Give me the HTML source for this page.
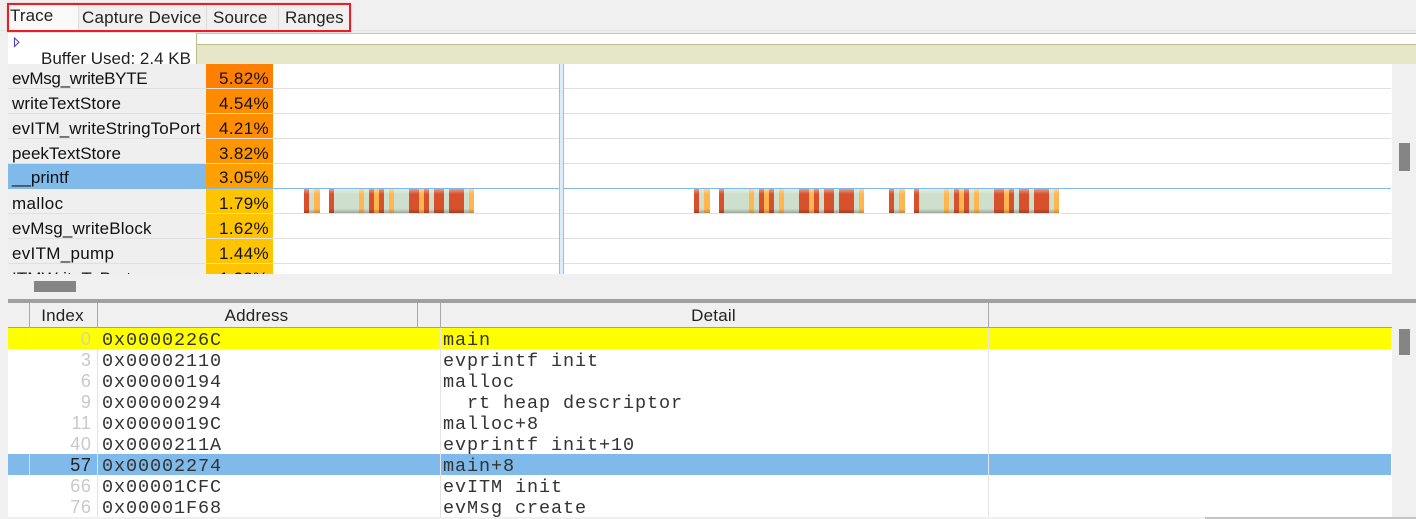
<!DOCTYPE html>
<html><head><meta charset="utf-8">
<style>
html,body{margin:0;padding:0;background:#f0f0f0}
body{width:1416px;height:519px;position:relative;overflow:hidden;font-family:"Liberation Sans",sans-serif;color:#111}
div{position:absolute;box-sizing:border-box}
.t{font-size:17px;line-height:25px;white-space:nowrap;letter-spacing:.1px}
.n{left:12px;width:190px}
.p{left:206px;width:67px;height:25px;text-align:right;padding-right:4px}
.t.p{letter-spacing:.35px}
.l{left:8px;width:1383px;height:1px;background:#e0e0e0}
.s{top:189px;height:24px;background-image:linear-gradient(rgba(255,255,255,.42),rgba(255,255,255,0) 22%,rgba(0,0,0,0) 82%,rgba(0,0,0,.25))}
.r{background-color:#d7522c}.g{background-color:#cfdfcd}.o{background-color:#ffb650}
.m{font-family:"Liberation Mono",monospace;font-size:18.5px;letter-spacing:.9px;line-height:21px;white-space:pre;color:#333}
.i{left:30px;width:61.5px;text-align:right;font-size:18px;letter-spacing:.6px;line-height:21px;color:#c9c9c9}
.h{top:303px;height:24px;font-size:17px;letter-spacing:.2px;line-height:25px;text-align:center;color:#222}
.v{top:303px;width:1px;height:25px;background:#a8a8a8}
.sb{background:#858585}
</style></head><body>

<!-- tabs -->
<div style="left:8px;top:4px;width:70px;height:26px;background:#f9f9f9"></div>
<div style="left:78px;top:4px;width:1px;height:26px;background:#ddd"></div>
<div style="left:206px;top:4px;width:1px;height:26px;background:#ddd"></div>
<div style="left:278px;top:4px;width:1px;height:26px;background:#ddd"></div>
<div style="left:0;top:30px;width:1416px;height:1px;background:#e4e4e4"></div>
<div class="t" style="left:10px;top:3px;color:#222">Trace</div>
<div class="t" style="left:82px;top:5px;color:#222;letter-spacing:.17px">Capture Device</div>
<div class="t" style="left:213px;top:5px;color:#222">Source</div>
<div class="t" style="left:285px;top:5px;color:#222;letter-spacing:0">Ranges</div>
<div style="left:7px;top:3px;width:344px;height:29px;border:2px solid #ee1c25;box-shadow:0 0 1px rgba(255,60,60,.5)"></div>

<!-- buffer strip -->
<div style="left:8px;top:33px;width:188px;height:31px;background:#fff"></div>
<svg style="position:absolute;left:13px;top:37px" width="8" height="11"><path d="M1.5 1L6 5.2L1.5 9.5Z" fill="#fff" stroke="#5a3fc0" stroke-width="1.1"/></svg>
<div class="t" style="left:41px;top:46px;color:#222;letter-spacing:0">Buffer Used: 2.4 KB</div>
<div style="left:196px;top:33px;width:1220px;height:1px;background:#c4c4c4"></div>
<div style="left:196px;top:34px;width:1220px;height:11px;background:#fff"></div>
<div style="left:196px;top:44px;width:1220px;height:20px;background:#e6e6c8;border-top:1px solid #bdbd8c"></div>
<div style="left:196px;top:34px;width:1px;height:30px;background:#bdbd8c"></div>

<!-- upper table -->
<div style="left:8px;top:64px;width:198px;height:210px;background:#efefef"></div>
<div style="left:273px;top:64px;width:1119px;height:210px;background:#fff"></div>
<div style="left:8px;top:164px;width:198px;height:25px;background:#7fbaeb"></div>

<div class="p" style="top:64px;background:#ff8000"></div>
<div class="p" style="top:89px;background:#ff8c00"></div>
<div class="p" style="top:114px;background:#ff8f00"></div>
<div class="p" style="top:139px;background:#ff9500"></div>
<div class="p" style="top:164px;background:#ffa000"></div>
<div class="p" style="top:189px;background:#ffc400"></div>
<div class="p" style="top:214px;background:#ffc400"></div>
<div class="p" style="top:239px;background:#ffc400"></div>
<div class="p" style="top:264px;height:10px;background:#ffc400"></div>

<div class="l" style="top:88px"></div>
<div class="l" style="top:113px"></div>
<div class="l" style="top:138px"></div>
<div class="l" style="top:163px"></div>
<div class="l" style="top:188px;background:#7fbaeb"></div>
<div class="l" style="top:213px"></div>
<div class="l" style="top:238px"></div>
<div class="l" style="top:263px"></div>

<div class="t n" style="top:66px;letter-spacing:-.3px">evMsg_writeBYTE</div>
<div class="t n" style="top:91px">writeTextStore</div>
<div class="t n" style="top:116px">evITM_writeStringToPort</div>
<div class="t n" style="top:141px;letter-spacing:.02px">peekTextStore</div>
<div class="t n" style="top:165px;letter-spacing:0">__printf</div>
<div class="t n" style="top:191px;letter-spacing:.4px">malloc</div>
<div class="t n" style="top:216px;letter-spacing:.17px">evMsg_writeBlock</div>
<div class="t n" style="top:241px;letter-spacing:.3px">evITM_pump</div>
<div style="left:8px;top:264px;width:265px;height:10px;overflow:hidden"><div class="t" style="left:4px;top:2px">ITMWriteToPort</div><div class="t" style="left:198px;top:2px;width:62px;text-align:right">1.38%</div></div>

<div class="t p" style="top:66px;background:none">5.82%</div>
<div class="t p" style="top:91px;background:none">4.54%</div>
<div class="t p" style="top:116px;background:none">4.21%</div>
<div class="t p" style="top:141px;background:none">3.82%</div>
<div class="t p" style="top:165px;background:none">3.05%</div>
<div class="t p" style="top:191px;background:none">1.79%</div>
<div class="t p" style="top:216px;background:none">1.62%</div>
<div class="t p" style="top:241px;background:none">1.44%</div>

<!-- cursor -->
<div style="left:559px;top:64px;width:5px;height:210px;background:#dcecfb;border-left:1px solid #8fc0ee;border-right:1px solid #8fc0ee"></div>

<!-- trace segments group 1 -->
<div class="s r" style="left:304px;width:5px"></div><div class="s g" style="left:309px;width:5px"></div><div class="s o" style="left:314px;width:5.5px"></div>
<div class="s r" style="left:329px;width:5px"></div><div class="s g" style="left:334px;width:25px"></div><div class="s o" style="left:359px;width:5px"></div><div class="s g" style="left:364px;width:5px"></div><div class="s r" style="left:369px;width:5px"></div><div class="s o" style="left:374px;width:5px"></div><div class="s r" style="left:379px;width:5px"></div><div class="s g" style="left:384px;width:5px"></div><div class="s o" style="left:389px;width:5px"></div><div class="s g" style="left:394px;width:15px"></div><div class="s r" style="left:409px;width:10px"></div><div class="s o" style="left:419px;width:5px"></div><div class="s r" style="left:424px;width:5px"></div><div class="s g" style="left:429px;width:5px"></div><div class="s r" style="left:434px;width:10px"></div><div class="s g" style="left:444px;width:5px"></div><div class="s r" style="left:449px;width:15px"></div><div class="s g" style="left:464px;width:5px"></div><div class="s o" style="left:469px;width:5px"></div>
<!-- group 2 -->
<div class="s r" style="left:694px;width:5px"></div><div class="s g" style="left:699px;width:5px"></div><div class="s o" style="left:704px;width:5.5px"></div>
<div class="s r" style="left:719px;width:5px"></div><div class="s g" style="left:724px;width:25px"></div><div class="s o" style="left:749px;width:5px"></div><div class="s g" style="left:754px;width:5px"></div><div class="s r" style="left:759px;width:5px"></div><div class="s o" style="left:764px;width:5px"></div><div class="s r" style="left:769px;width:5px"></div><div class="s g" style="left:774px;width:5px"></div><div class="s o" style="left:779px;width:5px"></div><div class="s g" style="left:784px;width:15px"></div><div class="s r" style="left:799px;width:10px"></div><div class="s o" style="left:809px;width:5px"></div><div class="s r" style="left:814px;width:5px"></div><div class="s g" style="left:819px;width:5px"></div><div class="s r" style="left:824px;width:10px"></div><div class="s g" style="left:834px;width:5px"></div><div class="s r" style="left:839px;width:15px"></div><div class="s g" style="left:854px;width:5px"></div><div class="s o" style="left:859px;width:5px"></div>
<!-- group 3 -->
<div class="s r" style="left:889px;width:5px"></div><div class="s g" style="left:894px;width:5px"></div><div class="s o" style="left:899px;width:5.5px"></div>
<div class="s r" style="left:914px;width:5px"></div><div class="s g" style="left:919px;width:25px"></div><div class="s o" style="left:944px;width:5px"></div><div class="s g" style="left:949px;width:5px"></div><div class="s r" style="left:954px;width:5px"></div><div class="s o" style="left:959px;width:5px"></div><div class="s r" style="left:964px;width:5px"></div><div class="s g" style="left:969px;width:5px"></div><div class="s o" style="left:974px;width:5px"></div><div class="s g" style="left:979px;width:15px"></div><div class="s r" style="left:994px;width:10px"></div><div class="s o" style="left:1004px;width:5px"></div><div class="s r" style="left:1009px;width:5px"></div><div class="s g" style="left:1014px;width:5px"></div><div class="s r" style="left:1019px;width:10px"></div><div class="s g" style="left:1029px;width:5px"></div><div class="s r" style="left:1034px;width:15px"></div><div class="s g" style="left:1049px;width:5px"></div><div class="s o" style="left:1054px;width:5px"></div>

<!-- scrollbars -->
<div class="sb" style="left:1399px;top:143px;width:11px;height:28px"></div>
<div class="sb" style="left:34px;top:281px;width:42px;height:11px"></div>

<!-- divider -->
<div style="left:8px;top:299px;width:1408px;height:4px;background:#a0a0a0"></div>

<!-- lower table -->
<div style="left:8px;top:327px;width:1384px;height:1px;background:#a0a0a0"></div>
<div style="left:8px;top:328px;width:1384px;height:189px;background:#fff"></div>
<div style="left:8px;top:328px;width:1383px;height:21px;background:#ffff00"></div>
<div style="left:8px;top:454px;width:1383px;height:21px;background:#7fbaeb"></div>

<div class="v" style="left:29px"></div>
<div class="v" style="left:97px"></div>
<div class="v" style="left:417px"></div>
<div class="v" style="left:440px"></div>
<div class="v" style="left:988px"></div>
<div style="left:97px;top:328px;width:1px;height:189px;background:#e4e4e4"></div>
<div style="left:440px;top:328px;width:1px;height:189px;background:#e4e4e4"></div>
<div style="left:988px;top:328px;width:1px;height:189px;background:#e4e4e4"></div>
<div style="left:29px;top:454px;width:1px;height:21px;background:#cfe3f6"></div>
<div style="left:29px;top:328px;width:1px;height:21px;background:#f4f4a0"></div>

<div class="h" style="left:29px;width:67px">Index</div>
<div class="h" style="left:97px;width:319px">Address</div>
<div class="h" style="left:440px;width:547px">Detail</div>

<div class="i" style="top:329px;color:#d8d88c">0</div>
<div class="i" style="top:350px">3</div>
<div class="i" style="top:371px">6</div>
<div class="i" style="top:392px">9</div>
<div class="i" style="top:413px">11</div>
<div class="i" style="top:434px">40</div>
<div class="i" style="top:455px;color:#222">57</div>
<div class="i" style="top:476px">66</div>
<div class="i" style="top:497px;height:20px;overflow:hidden">76</div>

<div class="m" style="left:102px;top:330px">0x0000226C</div>
<div class="m" style="left:102px;top:351px">0x00002110</div>
<div class="m" style="left:102px;top:372px">0x00000194</div>
<div class="m" style="left:102px;top:393px">0x00000294</div>
<div class="m" style="left:102px;top:414px">0x0000019C</div>
<div class="m" style="left:102px;top:435px">0x0000211A</div>
<div class="m" style="left:102px;top:456px">0x00002274</div>
<div class="m" style="left:102px;top:477px">0x00001CFC</div>
<div class="m" style="left:102px;top:498px;height:19px;overflow:hidden">0x00001F68</div>

<div class="m" style="left:443px;top:330px">main</div>
<div class="m" style="left:443px;top:351px">evprintf init</div>
<div class="m" style="left:443px;top:372px">malloc</div>
<div class="m" style="left:443px;top:393px">  rt heap descriptor</div>
<div class="m" style="left:443px;top:414px">malloc+8</div>
<div class="m" style="left:443px;top:435px">evprintf init+10</div>
<div class="m" style="left:443px;top:456px">main+8</div>
<div class="m" style="left:443px;top:477px">evITM init</div>
<div class="m" style="left:443px;top:498px;height:19px;overflow:hidden">evMsg create</div>

<div class="sb" style="left:1399px;top:329px;width:11px;height:26px"></div>
<div style="left:1205px;top:517px;width:211px;height:2px;background:#c4c4c4"></div>
</body></html>
